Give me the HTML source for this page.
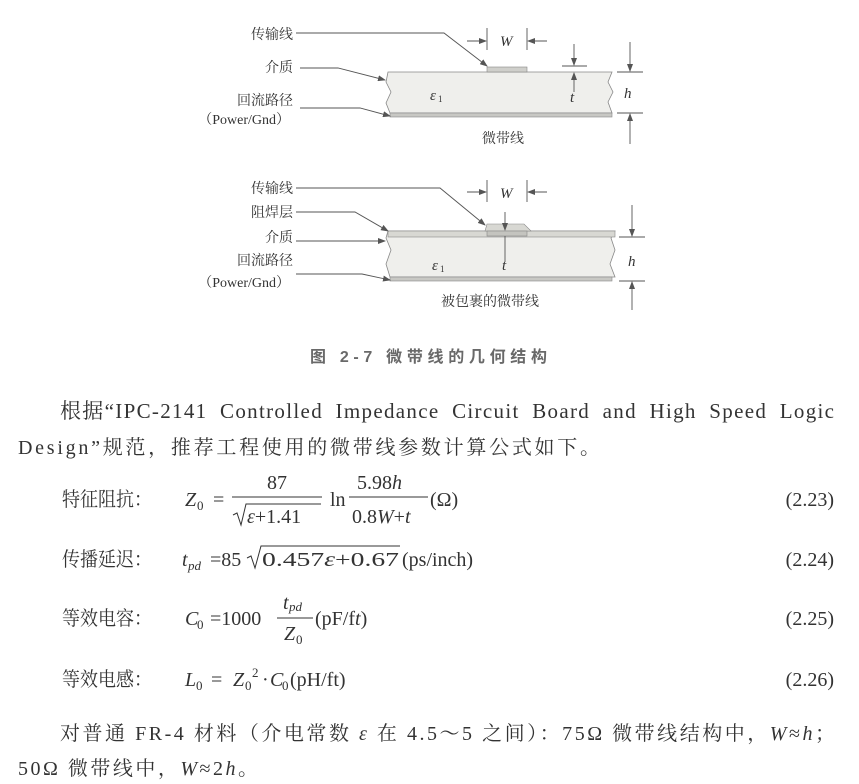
<!DOCTYPE html>
<html><head><meta charset="utf-8"><style>
html,body{margin:0;padding:0;background:#fff;}
svg{display:block}
.s{font-family:"Liberation Serif","Noto Serif CJK SC",serif;fill:#333}
.i{font-style:italic}
.c{font-family:"Liberation Sans","Noto Sans CJK SC",sans-serif;fill:#444}
</style></head><body>
<svg width="859" height="784" viewBox="0 0 859 784" xmlns="http://www.w3.org/2000/svg">
<defs><marker id="a" markerWidth="8" markerHeight="6" refX="7" refY="3" orient="auto" markerUnits="userSpaceOnUse"><path d="M0,0L8,3L0,6z" fill="#555"/></marker></defs>
<g class="s" font-size="14" text-anchor="end">
<text x="293" y="39">传输线</text>
<text x="293" y="72">介质</text>
<text x="293" y="105">回流路径</text>
<text x="290" y="124">（Power/Gnd）</text>
<text x="293" y="193">传输线</text>
<text x="293" y="217">阻焊层</text>
<text x="293" y="242">介质</text>
<text x="293" y="265">回流路径</text>
<text x="290" y="287">（Power/Gnd）</text>
</g>
<path d="M388,72 L612,72 L608,82 L613,92 L608,102 L612,113 L390,113 L386,103 L391,92 L386,82 Z" fill="#efefec" stroke="#888" stroke-width="0.8"/>
<rect x="390" y="113" width="222" height="4" fill="#c8c8c4" stroke="#888" stroke-width="0.6"/>
<rect x="487" y="67" width="40" height="5" fill="#cfcfcb" stroke="#888" stroke-width="0.6"/>
<g stroke="#555" stroke-width="0.9" fill="none">
<path d="M296,33 L444,33 L487,66" marker-end="url(#a)"/>
<path d="M300,68 L338,68 L385,80" marker-end="url(#a)"/>
<path d="M300,108 L360,108 L390,116" marker-end="url(#a)"/>
<path d="M487,28V50M527,28V50" />
<path d="M467,41H486" marker-end="url(#a)"/><path d="M547,41H528" marker-end="url(#a)"/>
<path d="M562,66H587M574,44V65" marker-end="url(#a)"/>
<path d="M574,92V73" marker-end="url(#a)"/>
<path d="M617,72H643M617,113H643M630,42V71" marker-end="url(#a)"/>
<path d="M630,144V114" marker-end="url(#a)"/>
</g>
<g class="s"><text x="500" y="46" font-size="15" class="i">W</text>
<text x="430" y="100" font-size="15" class="i">ε</text><text x="438" y="102" font-size="9">1</text>
<text x="570" y="102" font-size="15" class="i">t</text>
<text x="624" y="98" font-size="15" class="i">h</text>
<text x="482" y="143" font-size="14">微带线</text></g>
<path d="M388,231 L615,231 L611,238 L615,250 L610,264 L615,277 L390,277 L386,264 L391,250 L386,238 Z" fill="#efefec" stroke="#888" stroke-width="0.8"/>
<rect x="388" y="231" width="227" height="6" fill="#d8d8d3" stroke="#888" stroke-width="0.6"/>
<path d="M485,231 L487,224 L524,224 L531,231 Z" fill="#d8d8d3" stroke="#888" stroke-width="0.6"/>
<rect x="487" y="231" width="40" height="5" fill="#c4c4bf" stroke="#888" stroke-width="0.6"/>
<rect x="390" y="277" width="222" height="4" fill="#c8c8c4" stroke="#888" stroke-width="0.6"/>
<g stroke="#555" stroke-width="0.9" fill="none">
<path d="M296,188 L440,188 L485,225" marker-end="url(#a)"/>
<path d="M296,212 L355,212 L388,231" marker-end="url(#a)"/>
<path d="M296,241 L385,241" marker-end="url(#a)"/>
<path d="M296,274 L362,274 L390,280" marker-end="url(#a)"/>
<path d="M487,180V202M527,180V202"/>
<path d="M467,192H486" marker-end="url(#a)"/><path d="M547,192H528" marker-end="url(#a)"/>
<path d="M505,212V230" marker-end="url(#a)"/><path d="M505,236V262"/>
<path d="M619,237H645M619,281H645"/>
<path d="M632,205V236" marker-end="url(#a)"/><path d="M632,310V282" marker-end="url(#a)"/>
</g>
<g class="s"><text x="500" y="198" font-size="15" class="i">W</text>
<text x="432" y="270" font-size="15" class="i">ε</text><text x="440" y="272" font-size="9">1</text>
<text x="502" y="270" font-size="15" class="i">t</text>
<text x="628" y="266" font-size="15" class="i">h</text>
<text x="441" y="306" font-size="14">被包裹的微带线</text></g>
<text class="c" x="310" y="362" font-size="16" textLength="237" lengthAdjust="spacing" font-weight="bold" fill-opacity="0.8">图 2-7   微带线的几何结构</text>
<g class="s" font-size="20">
<text x="60" y="418" font-size="21" word-spacing="6" textLength="774" lengthAdjust="spacing">根据“IPC-2141 Controlled Impedance Circuit Board and High Speed Logic</text>
<text x="18" y="454" textLength="582" lengthAdjust="spacing">Design”规范，推荐工程使用的微带线参数计算公式如下。</text>
<text x="62" y="506" textLength="90" lengthAdjust="spacingAndGlyphs">特征阻抗：</text>
<text x="185" y="506" class="i">Z</text><text x="197" y="510" font-size="13">0</text>
<text x="213" y="506">=</text>
<line x1="232" y1="497" x2="322" y2="497" stroke="#333" stroke-width="1"/>
<text x="267" y="489">87</text>
<text x="247" y="523"><tspan class="i">ε</tspan>+1.41</text>
<path d="M233,515 L237,513 L241,525 L246,504 L321,504" stroke="#333" fill="none" stroke-width="1"/>
<text x="330" y="506">ln</text>
<line x1="349" y1="497" x2="428" y2="497" stroke="#333" stroke-width="1"/>
<text x="357" y="489">5.98<tspan class="i">h</tspan></text>
<text x="352" y="523">0.8<tspan class="i">W</tspan>+<tspan class="i">t</tspan></text>
<text x="430" y="506">(Ω)</text>
<text x="834" y="506" text-anchor="end">(2.23)</text>
<text x="62" y="566" textLength="90" lengthAdjust="spacingAndGlyphs">传播延迟：</text>
<text x="182" y="566" class="i">t</text><text x="188" y="570" font-size="13" class="i">pd</text>
<text x="210" y="566">=85</text>
<path d="M247,558 L251,556 L255,568 L261,546 L400,546" stroke="#333" fill="none" stroke-width="1"/>
<text x="262" y="566" textLength="137" lengthAdjust="spacingAndGlyphs">0.457<tspan class="i">ε</tspan>+0.67</text>
<text x="402" y="566">(ps/inch)</text>
<text x="834" y="566" text-anchor="end">(2.24)</text>
<text x="62" y="625" textLength="90" lengthAdjust="spacingAndGlyphs">等效电容：</text>
<text x="185" y="625" class="i">C</text><text x="197" y="629" font-size="13">0</text>
<text x="210" y="625">=1000</text>
<line x1="277" y1="618" x2="313" y2="618" stroke="#333" stroke-width="1"/>
<text x="283" y="609" class="i">t</text><text x="289" y="611" font-size="13" class="i">pd</text>
<text x="284" y="640" class="i">Z</text><text x="296" y="644" font-size="13">0</text>
<text x="315" y="625">(pF/f<tspan class="i">t</tspan>)</text>
<text x="834" y="625" text-anchor="end">(2.25)</text>
<text x="62" y="686" textLength="90" lengthAdjust="spacingAndGlyphs">等效电感：</text>
<text x="185" y="686" class="i">L</text><text x="196" y="690" font-size="13">0</text>
<text x="211" y="686">=</text>
<text x="233" y="686" class="i">Z</text><text x="245" y="690" font-size="13">0</text><text x="252" y="677" font-size="13">2</text>
<text x="262" y="686">·</text>
<text x="270" y="686" class="i">C</text><text x="282" y="690" font-size="13">0</text>
<text x="290" y="686">(pH/ft)</text>
<text x="834" y="686" text-anchor="end">(2.26)</text>
<text x="60" y="740" textLength="775" lengthAdjust="spacing">对普通 FR-4 材料（介电常数 <tspan class="i">ε</tspan> 在 4.5～5 之间）：75Ω 微带线结构中，<tspan class="i">W</tspan>≈<tspan class="i">h</tspan>；</text>
<text x="18" y="775" textLength="240" lengthAdjust="spacing">50Ω 微带线中，<tspan class="i">W</tspan>≈2<tspan class="i">h</tspan>。</text>
</g>
</svg>
</body></html>
